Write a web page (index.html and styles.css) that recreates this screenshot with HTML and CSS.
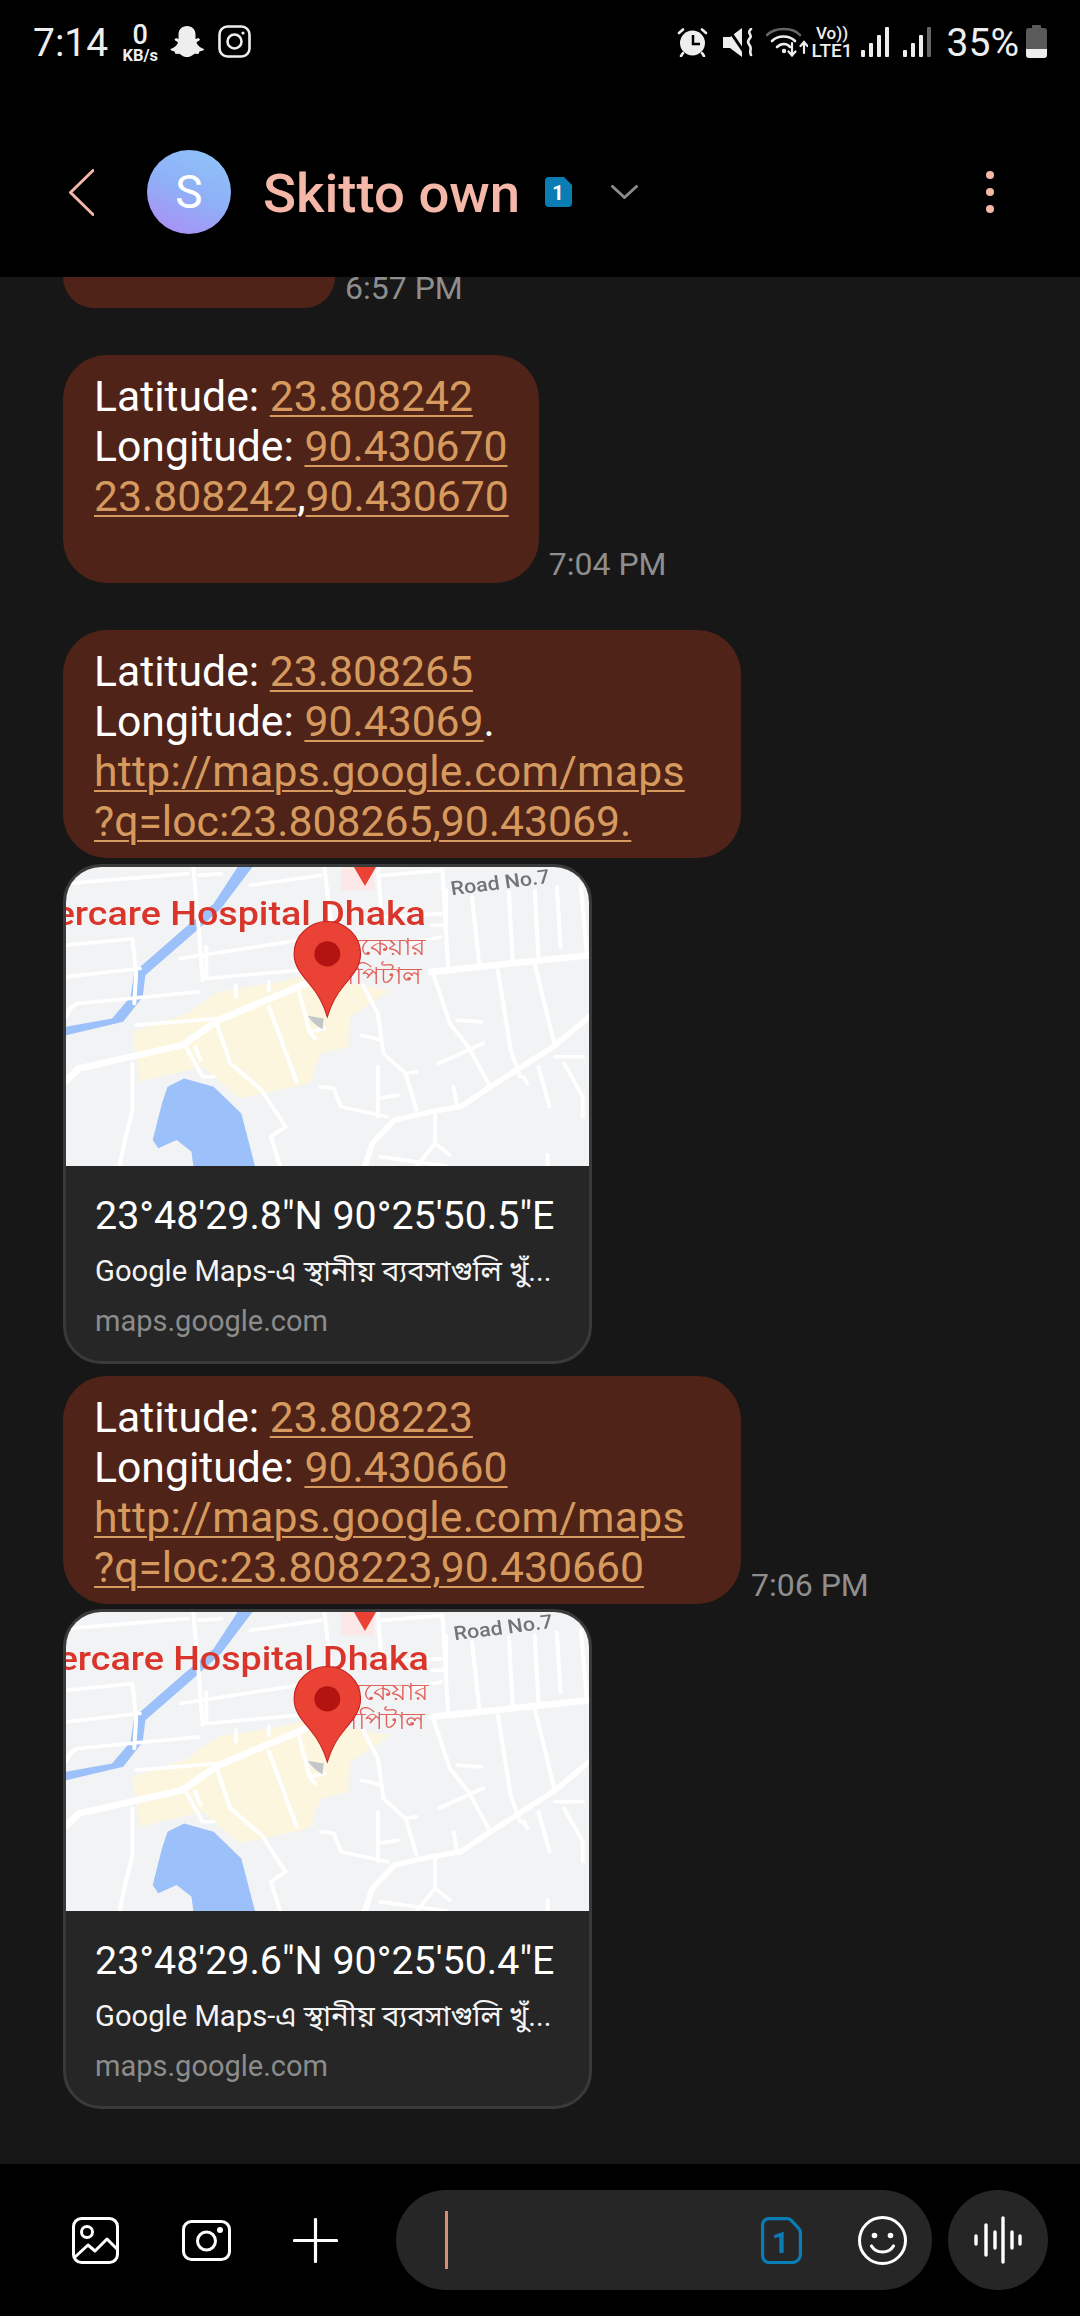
FILE: index.html
```html
<!DOCTYPE html>
<html lang="en">
<head>
<meta charset="utf-8">
<title>Skitto own</title>
<link rel="stylesheet" href="styles.css">
</head>
<body>
<svg class="defs" width="0" height="0" aria-hidden="true">
  <symbol id="mapbase" viewBox="70 50 1417 898" preserveAspectRatio="none">
    <rect x="70" y="50" width="1417" height="898" fill="#f1f3f4"/>
    <path fill="#fdf6df" d="M250 545 400 490 480 425 650 395 720 375 950 420 840 500 835 590 760 610 730 700 540 745 440 650 270 695Z"/>
    <path fill="#fce8e6" d="M815 50H905V120H815Z"/>
    <path fill="#ea4335" d="M850 50H910L880 107Z"/>
    <path fill="#9cc0f9" d="M345 710 390 685 470 710 545 790 582 948H415L410 905 370 870 320 895 305 870 330 760Z"/>
    <path fill="#9cc0f9" d="M535 50H575L490 175 415 250 285 375 278 440 225 515 70 555V530L195 505 245 440 255 365 390 235 470 160Z"/>
    <g fill="none" stroke="#fff" stroke-width="11" stroke-linecap="round" stroke-linejoin="round">
      <path stroke-width="20" d="M70 692 105 655 385 585 480 512 720 400M1060 365 1487 315"/>
      <path stroke-width="16" d="M1487 500 1390 590 1220 710 1140 770 1060 785 960 810 900 880 880 948"/>
      <path d="M415 50 430 240 440 390M70 100 400 70M570 105 760 75M430 75 490 70"/>
      <path d="M70 285 250 265 260 370 255 460M70 380 270 355M70 485 100 460 430 425M70 500 85 470"/>
      <path d="M260 525 480 505M250 640 250 780 230 870 215 948"/>
      <path d="M380 325 700 270M450 290 450 385 700 360M530 405 530 440M620 395 620 420"/>
      <path d="M770 50 790 240 800 290M915 50 925 200 1085 190M925 75 1090 60 1105 350"/>
      <path d="M1170 140 1190 345M1270 125 1280 330M1340 120 1350 320M1400 110 1410 290M1465 105 1480 300"/>
      <path d="M1060 225 1100 225 1100 120M1000 280 1085 260"/>
      <path d="M620 470 695 695M480 525 515 640 600 720 665 830 625 860 650 948"/>
      <path d="M395 590 440 680 470 680M420 590 435 630"/>
      <path d="M700 420 730 545 745 565M730 545 770 535"/>
      <path d="M875 405 915 490 930 610 990 670 1020 780M870 555 925 570M990 670 1020 665"/>
      <path d="M760 710 795 715 815 770 940 800M915 650 915 800M915 745 970 735"/>
      <path d="M1065 370 1110 520 1160 590 1220 710M1240 360 1275 600 1300 680M1340 340 1395 590M1130 510 1195 515M1080 640 1200 580"/>
      <path d="M1395 620 1470 620M1350 650 1380 770M1420 640 1470 740 1470 800M1120 710 1130 770M1310 680 1320 700"/>
      <path d="M1070 785 1070 880 1020 948M1070 880 1110 915M920 920 1100 948M1375 915 1375 948"/>
    </g>
    <path fill="#c4c7ca" d="M725 497 768 505 765 538 748 525 735 512Z"/>
  </symbol>
  <symbol id="mappin" viewBox="70 50 1417 898" preserveAspectRatio="none">
    <path fill="#ea4335" stroke="#c5221f" stroke-width="3" d="M778 214c48 0 90 42 90 96 0 38-18 60-45 96-20 26-34 54-45 94-11-40-25-68-45-94-27-36-45-58-45-96 0-54 42-96 90-96Z"/>
    <ellipse cx="778" cy="311" rx="35" ry="38" fill="#b31412"/>
  </symbol>
</svg>

<header class="top">
  <div class="status">
    <div class="status-left">
      <span class="clock">7:14</span>
      <span class="speed"><b class="speed-num">0</b><b class="speed-unit">KB/s</b></span>
      <svg class="ic-snap" viewBox="0 0 36 34"><path fill="#eee" d="M18 1c5 0 8.500 3.500 8.500 8.500v4.500l3-1 1.500 1.500c-.5 1.500-3 2-3.500 3 1 3 4 5.500 7.500 6.500.5 1-1.500 2-4.500 2.500l-1 2.500-3.500-.3c-2 .5-3.500 3.300-8 3.300s-6-2.800-8-3.300l-3.500.3-1-2.500C3 26 1 25 1.500 24c3.500-1 6.500-3.500 7.500-6.500-.5-1-3-1.500-3.500-3L7 13l2.500 1V9.500C9.500 4.500 13 1 18 1Z"/></svg>
      <svg class="ic-ig" viewBox="0 0 33 33" fill="none" stroke="#eee" stroke-width="2.600"><rect x="1.500" y="1.500" width="30" height="30" rx="8"/><circle cx="16.500" cy="16.500" r="7"/><circle cx="25" cy="8" r="1.600" fill="#eee" stroke="none"/></svg>
    </div>
    <div class="status-right">
      <svg class="ic-alarm" viewBox="0 0 31 30"><circle cx="15.500" cy="16" r="12.500" fill="#eee"/><path fill="none" stroke="#000" stroke-width="2.500" d="M16 8v9h7"/><path fill="none" stroke="#eee" stroke-width="2.600" stroke-linecap="round" d="M2 6l4-3.500M29 6l-4-3.500M6 26l-2 3M25 26l2 3"/></svg>
      <svg class="ic-mute" viewBox="0 0 30 29"><path fill="#eee" d="M0 9h7L19 0v29L7 20H0Z"/><path stroke="#000" stroke-width="3" d="M4 -1 23 27"/><path fill="none" stroke="#eee" stroke-width="2.600" stroke-linecap="round" d="M28 1c-5 4 2 6-1 9-3 3-2 5 0 8 2 3-1 5 1 9"/></svg>
      <svg class="ic-wifi" viewBox="0 0 42 31" fill="none" stroke-linecap="round"><path stroke="#666" stroke-width="2.600" d="M1 9C9 1 27 1 34 9"/><path stroke="#eee" stroke-width="2.600" d="M6 15c6-6 17-6 23 0M11 21c4-4 10-4 13 0"/><circle cx="18" cy="25" r="2.200" fill="#eee"/><path stroke="#eee" stroke-width="2.200" d="M26 17v12M22.500 25.500 26 29.500l3.500-4M38 27V16M34.500 20 38 16l3.500 4"/></svg>
      <span class="volte"><span class="vo">Vo))</span><span class="lte">LTE1</span></span>
      <svg class="ic-sig" viewBox="0 0 28 30" fill="#eee"><rect x="0" y="23" width="4" height="7" rx="1"/><rect x="8" y="16" width="4" height="14" rx="1"/><rect x="16" y="8" width="4" height="22" rx="1"/><rect x="24" y="0" width="4" height="30" rx="1"/></svg>
      <svg class="ic-sig ic-sig2" viewBox="0 0 28 30" fill="#eee"><rect x="0" y="23" width="4" height="7" rx="1"/><rect x="8" y="16" width="4" height="14" rx="1"/><rect x="16" y="8" width="4" height="22" rx="1"/><rect x="24" y="0" width="4" height="30" rx="1" fill="#666"/></svg>
      <span class="pct">35%</span>
      <svg class="ic-batt" viewBox="0 0 21 33"><path fill="#5a5a5a" d="M7 0h7a1 1 0 0 1 1 1v2h3a3 3 0 0 1 3 3v18H0V6a3 3 0 0 1 3-3h3V1a1 1 0 0 1 1-1Z"/><path fill="#eee" d="M0 24h21v6a3 3 0 0 1-3 3H3a3 3 0 0 1-3-3Z"/></svg>
    </div>
  </div>
  <div class="appbar">
    <svg class="ic-back" viewBox="0 0 25 47" fill="none" stroke="#f4b7a8" stroke-width="3" stroke-linecap="round" stroke-linejoin="round"><path d="M24 1.500 1.500 23.500 24 45.500"/></svg>
    <div class="avatar">S</div>
    <span class="name">Skitto own</span>
    <svg class="ic-simbadge" viewBox="0 0 27 30"><path fill="#0b7db5" d="M4 0h15l8 8v18a4 4 0 0 1-4 4H4a4 4 0 0 1-4-4V4a4 4 0 0 1 4-4Z"/><text x="13" y="23" class="sim-num">1</text></svg>
    <svg class="ic-down" viewBox="0 0 27 14" fill="none" stroke="#8a8a8a" stroke-width="3" stroke-linecap="round" stroke-linejoin="round"><path d="M1.500 1.500 13.500 12.500 25.500 1.500"/></svg>
    <div class="dots"><i class="dot"></i><i class="dot"></i><i class="dot"></i></div>
  </div>
</header>

<main class="chat">
  <div class="row row-cut">
    <div class="bubble bubble-cut"></div>
    <time class="stamp">6:57 PM</time>
  </div>

  <div class="row row-sep">
    <div class="bubble bubble-extra">Latitude: <a class="lnk">23.808242</a><br>Longitude: <a class="lnk">90.430670</a><br><a class="lnk">23.808242</a>,<a class="lnk">90.430670</a><br>&nbsp;</div>
    <time class="stamp">7:04 PM</time>
  </div>

  <div class="row row-sep">
    <div class="bubble bubble-wide">Latitude: <a class="lnk">23.808265</a><br>Longitude: <a class="lnk">90.43069</a>.<br><a class="lnk"><span class="url-head">http://maps.google.com/maps</span><br>?q=loc:23.808265,90.43069.</a></div>
  </div>

  <article class="card">
    <svg class="map" viewBox="70 50 1417 898" preserveAspectRatio="none">
      <use href="#mapbase" x="70" y="50" width="1417" height="898"/>
      <g class="maptext">
        <text x="1045" y="225" class="m-place">ercare Hospital Dhaka</text>
        <text x="1045" y="315" class="m-bn">এভারকেয়ার</text>
        <text x="1035" y="402" class="m-bn">হসপিটাল</text>
        <text x="1115" y="135" class="m-road" transform="rotate(-8 1115 135)">Road No.7</text>
      </g>
      <use href="#mappin" x="70" y="50" width="1417" height="898"/>
    </svg>
    <div class="card-body">
      <div class="card-title">23°48'29.8"N 90°25'50.5"E</div>
      <div class="card-desc">Google Maps-এ স্থানীয় ব্যবসাগুলি খুঁ...</div>
      <div class="card-url">maps.google.com</div>
    </div>
  </article>

  <div class="row row-after-card">
    <div class="bubble bubble-wide">Latitude: <a class="lnk">23.808223</a><br>Longitude: <a class="lnk">90.430660</a><br><a class="lnk"><span class="url-head">http://maps.google.com/maps</span><br>?q=loc:23.808223,90.430660</a></div>
    <time class="stamp">7:06 PM</time>
  </div>

  <article class="card">
    <svg class="map" viewBox="70 50 1417 898" preserveAspectRatio="none">
      <use href="#mapbase" x="70" y="50" width="1417" height="898"/>
      <g class="maptext" transform="translate(8 0)">
        <text x="1045" y="225" class="m-place">ercare Hospital Dhaka</text>
        <text x="1045" y="315" class="m-bn">এভারকেয়ার</text>
        <text x="1035" y="402" class="m-bn">হসপিটাল</text>
        <text x="1115" y="135" class="m-road" transform="rotate(-8 1115 135)">Road No.7</text>
      </g>
      <use href="#mappin" x="70" y="50" width="1417" height="898"/>
    </svg>
    <div class="card-body">
      <div class="card-title">23°48'29.6"N 90°25'50.4"E</div>
      <div class="card-desc">Google Maps-এ স্থানীয় ব্যবসাগুলি খুঁ...</div>
      <div class="card-url">maps.google.com</div>
    </div>
  </article>
</main>

<footer class="bottom">
  <svg class="ic-gallery" viewBox="0 0 47 47" fill="none" stroke="#fff" stroke-width="3" stroke-linecap="round" stroke-linejoin="round"><rect x="1.500" y="1.500" width="44" height="44" rx="8"/><circle cx="15" cy="15" r="5.500"/><path d="M3 40 16 28l7 6 12-12 10 10"/></svg>
  <svg class="ic-camera" viewBox="0 0 49 41" fill="none" stroke="#fff" stroke-width="3"><rect x="1.500" y="1.500" width="46" height="38" rx="8"/><circle cx="24.500" cy="21" r="9"/><circle cx="38" cy="10" r="3" fill="#fff" stroke="none"/></svg>
  <svg class="ic-plus" viewBox="0 0 45 45" fill="none" stroke="#fff" stroke-width="3.200" stroke-linecap="round"><path d="M22.500 1.500v42M1.500 22.500h42"/></svg>
  <div class="input">
    <i class="cursor"></i>
    <svg class="ic-sim" viewBox="0 0 41 47"><path fill="none" stroke="#0b7db5" stroke-width="3.200" d="M8 1.600h18c2 0 3 .6 4 1.600l7.500 8c1.400 1.500 1.900 2.700 1.900 4.800V37.500a8 8 0 0 1-8 8H8a6.400 6.400 0 0 1-6.400-6.400V8A6.400 6.400 0 0 1 8 1.600Z"/><text x="19.500" y="36" class="sim-out">1</text></svg>
    <svg class="ic-emoji" viewBox="0 0 49 49" fill="none" stroke="#fff" stroke-width="3"><circle cx="24.500" cy="24.500" r="23"/><circle cx="16.500" cy="19.500" r="2.800" fill="#fff" stroke="none"/><circle cx="32.500" cy="19.500" r="2.800" fill="#fff" stroke="none"/><path stroke-width="3.200" stroke-linecap="round" d="M13.500 30c2.500 4 6.500 6 11 6s8.500-2 11-6"/></svg>
  </div>
  <div class="voice">
    <svg class="ic-voice" viewBox="0 0 48 48" fill="none" stroke="#fff" stroke-width="3.400" stroke-linecap="round"><path d="M2 20v8M12 9v30M21 16v16M29 2v44M38 16v16M46 20v8"/></svg>
  </div>
</footer>
</body>
</html>
```

FILE: styles.css
```css
* { box-sizing: border-box; }
html, body { margin: 0; padding: 0; }
body {
  width: 1080px;
  height: 2316px;
  display: flex;
  flex-direction: column;
  overflow: hidden;
  background: #000;
  font-family: Roboto, "Noto Sans", "Noto Sans Bengali", sans-serif;
  color: #fff;
}
.defs { position: absolute; }

/* top */
.top { flex: none; height: 277px; background: #000; display: flex; flex-direction: column; }
.status {
  flex: none;
  height: 107px;
  padding: 25px 33px 0 33px;
  display: flex;
  justify-content: space-between;
  align-items: flex-start;
  color: #eee;
}
.status-left, .status-right { display: flex; align-items: flex-start; }
.clock, .pct { font-size: 39px; line-height: 36px; font-weight: 400; }
.speed { display: flex; flex-direction: column; align-items: center; margin-left: 11px; width: 42px; }
.speed-num { font-size: 27px; line-height: 20px; font-weight: 500; }
.speed-unit { font-size: 16.500px; line-height: 14px; font-weight: 700; margin-top: 4px; }
.ic-snap { width: 36px; height: 34px; margin-left: 8px; }
.ic-ig { width: 33px; height: 33px; margin-left: 13px; }
.ic-alarm { width: 31px; height: 30px; margin-top: 2px; }
.ic-mute { width: 30px; height: 29px; margin-left: 15px; margin-top: 3px; }
.ic-wifi { width: 42px; height: 31px; margin-left: 13px; margin-top: 1px; }
.volte { display: flex; flex-direction: column; align-items: center; width: 39px; margin-left: 5px; font-weight: 500; }
.vo { font-size: 17px; line-height: 17px; }
.lte { font-size: 19px; line-height: 17px; }
.ic-sig { width: 28px; height: 30px; margin-left: 9px; margin-top: 2px; }
.ic-sig2 { margin-left: 14px; }
.pct { margin-left: 16px; }
.ic-batt { width: 21px; height: 33px; margin-left: 7px; }

.appbar { flex: 1; display: flex; align-items: center; padding-left: 69px; }
.ic-back { width: 25px; height: 47px; flex: none; }
.avatar {
  width: 84px;
  height: 84px;
  margin-left: 53px;
  border-radius: 50%;
  background: linear-gradient(205deg, #8fc3f8 5%, #8fb0f7 50%, #a596f5 85%);
  display: flex;
  align-items: center;
  justify-content: center;
  font-size: 46px;
  color: #fff;
}
.name { margin-left: 32px; font-size: 54.500px; font-weight: 500; color: #f4b7a8; line-height: 60px; margin-top: 2px; }
.ic-simbadge { width: 27px; height: 30px; margin-left: 25px; }
.sim-num { font: 700 20px Roboto, sans-serif; fill: #fff; text-anchor: middle; }
.ic-down { width: 27px; height: 14px; margin-left: 39px; }
.dots { margin-left: auto; margin-right: 86px; display: flex; flex-direction: column; gap: 9px; }
.dot { display: block; width: 8px; height: 8px; border-radius: 50%; background: #f4b7a8; }

/* chat */
.chat {
  flex: 1;
  min-height: 0;
  overflow: hidden;
  background: #171717;
  padding-left: 63px;
  display: flex;
  flex-direction: column;
}
.row { display: flex; align-items: flex-end; gap: 10px; flex: none; }
.row-cut { height: 31px; }
.row-sep { margin-top: 47px; }
.row-after-card { margin-top: 12px; }
.bubble {
  background: #4f2318;
  border-radius: 44px;
  padding: 16px 30px 12px 31px;
  font-size: 42.700px;
  line-height: 50px;
  color: #fff;
  white-space: nowrap;
}
.bubble-cut { width: 272px; height: 31px; padding: 0; border-radius: 0 0 44px 44px; }
.bubble-wide { width: 678px; }
.lnk { color: #d69a5e; text-decoration: underline; text-decoration-thickness: 2px; text-underline-offset: 4px; }
.url-head { letter-spacing: 0.270px; }
.stamp { font-size: 32px; line-height: 34px; color: #8e8e8e; margin-bottom: 2px; }
.row-cut .stamp { margin-bottom: 3px; }

.card {
  flex: none;
  width: 529px;
  height: 500px;
  margin-top: 6px;
  border: 3px solid #3a3a3a;
  border-radius: 38px;
  background: #262626;
  overflow: hidden;
}
.row-after-card + .card { margin-top: 5px; }
.map { display: block; width: 523px; height: 299px; filter: blur(0.7px); }
.m-place { font: 500 102px Roboto, sans-serif; fill: #d9352b; text-anchor: end; }
.m-bn { font: 500 72px "Noto Sans", sans-serif; fill: #e0605a; text-anchor: end; }
.m-road { font: 500 58px Roboto, sans-serif; fill: #70757a; }
.card-body { padding: 27px 20px 0 29px; }
.card-title { font-size: 39.400px; line-height: 46px; color: #fff; white-space: nowrap; }
.card-desc { font-size: 29.200px; line-height: 40px; margin-top: 12px; color: #f4f4f4; white-space: nowrap; }
.card-url { font-size: 29px; line-height: 40px; margin-top: 10px; color: #8c8c8c; }

/* bottom */
.bottom {
  flex: none;
  height: 152px;
  background: #000;
  padding: 26px 0 26px 72px;
  display: flex;
  align-items: center;
}
.ic-gallery { width: 47px; height: 47px; flex: none; }
.ic-camera { width: 49px; height: 41px; margin-left: 63px; flex: none; }
.ic-plus { width: 45px; height: 45px; margin-left: 62px; flex: none; }
.input {
  width: 536px;
  height: 100px;
  margin-left: 58px;
  border-radius: 50px;
  background: #262626;
  display: flex;
  align-items: center;
  padding-left: 49px;
  flex: none;
}
.cursor { display: block; width: 3px; height: 58px; background: #d98c76; }
.ic-sim { width: 41px; height: 47px; margin-left: 313px; flex: none; }
.sim-out { font: 700 30px Roboto, sans-serif; fill: #0b7db5; text-anchor: middle; }
.ic-emoji { width: 49px; height: 49px; margin-left: 56px; flex: none; }
.voice {
  width: 100px;
  height: 100px;
  margin-left: 16px;
  border-radius: 50%;
  background: #262626;
  display: flex;
  align-items: center;
  justify-content: center;
  flex: none;
}
.ic-voice { width: 48px; height: 48px; }
```
